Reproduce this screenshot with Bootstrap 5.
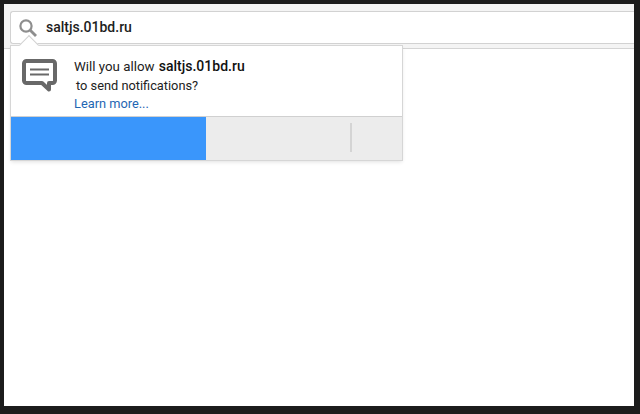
<!DOCTYPE html>
<html lang="en">
<head>
    <meta charset="UTF-8">
    <meta name="viewport" content="width=device-width, initial-scale=1.0">
    <title>Notification prompt</title>
    <link href="https://cdn.jsdelivr.net/npm/bootstrap@5.3.2/dist/css/bootstrap.min.css" rel="stylesheet">
    <style>
        html, body { height: 414px; overflow: hidden; }
        body { background: #1c1c1c; padding: 4px 6px 8px 4px; font-family: Roboto, "Liberation Sans", sans-serif; color: #222; }
        .screen-area { height: 402px; background: #fff; }
        .top-strip { height: 45px; background: #f4f4f4; border-bottom: 1px solid #d4d4d4; padding: 7px 0 5px 6px; }
        .url-box { height: 33px; background: #fff; border: 1px solid #d2d2d2; border-right: 0; border-radius: 3px 0 0 3px; padding-left: 7px; gap: 8px; }
        .url-text { font-size: 14px; font-weight: 500; color: #1d1d1d; }
        .prompt-box { position: absolute; top: 46px; left: 11px; width: 391px; height: 114px; background: #fff; box-shadow: 0 0 0 1px #d6d6d6, 0 2px 4px rgba(0,0,0,.12); }
        .prompt-tip { position: absolute; top: -8px; left: 11px; width: 14px; height: 14px; background: #fff; border-top: 1px solid #d2d2d2; border-left: 1px solid #d2d2d2; transform: rotate(45deg); }
        .prompt-body { height: 70px; padding: 11px 0 0 11px; gap: 17px; font-size: 12.8px; line-height: 18.5px; }
        .prompt-body b { font-weight: 500; font-size: 14px; color: #111; margin-left: 1px; }
        .first-line { font-size: 13.3px; }
        .indent-line { padding-left: 2px; }
        .learn-link { color: #1f66b3; text-decoration: none; }
        .prompt-btns { height: 44px; border-top: 1px solid #d0d0d0; background: #ececec; }
        .allow-btn { width: 195px; background: #3a96fb; }
        .btn-divider { position: absolute; left: 339px; top: 77px; width: 2px; height: 29px; background: #d4d4d4; }
        .bubble-icon { margin-top: 2px; }
    </style>
</head>
<body>
    <div class="screen-area">
        <div class="top-strip">
            <div class="url-box d-flex align-items-center">
                <svg width="20" height="20" viewBox="0 0 20 20" fill="none" stroke="#8e8e8e">
                    <circle cx="8" cy="8" r="5.6" stroke-width="2.2"/>
                    <path d="M12 12l6 6" stroke-width="2.8"/>
                </svg>
                <span class="url-text">saltjs.01bd.ru</span>
            </div>
        </div>
    </div>

    <div class="prompt-box">
        <div class="prompt-tip"></div>
        <div class="prompt-body d-flex position-relative">
            <svg class="bubble-icon flex-shrink-0" width="35" height="33" viewBox="0 0 35 33">
                <path d="M4.500 2h26a2.500 2.500 0 0 1 2.500 2.500v17a2.500 2.500 0 0 1-2.500 2.500h-3.500v6.500l-7-6.500H4.500A2.500 2.500 0 0 1 2 21.500v-17A2.500 2.500 0 0 1 4.500 2z" fill="#fff" stroke="#686868" stroke-width="4" stroke-linejoin="round"/>
                <path d="M8 10.500h19M8 15.500h19" stroke="#686868" stroke-width="2"/>
            </svg>
            <div>
                <div class="first-line">Will you allow <b>saltjs.01bd.ru</b></div>
                <div class="indent-line">to send notifications?</div>
                <div><a class="learn-link" href="#">Learn more...</a></div>
            </div>
        </div>
        <div class="prompt-btns d-flex">
            <div class="allow-btn"></div>
        </div>
        <div class="btn-divider"></div>
    </div>

    <script src="https://cdn.jsdelivr.net/npm/bootstrap@5.3.2/dist/js/bootstrap.bundle.min.js"></script>
</body>
</html>
